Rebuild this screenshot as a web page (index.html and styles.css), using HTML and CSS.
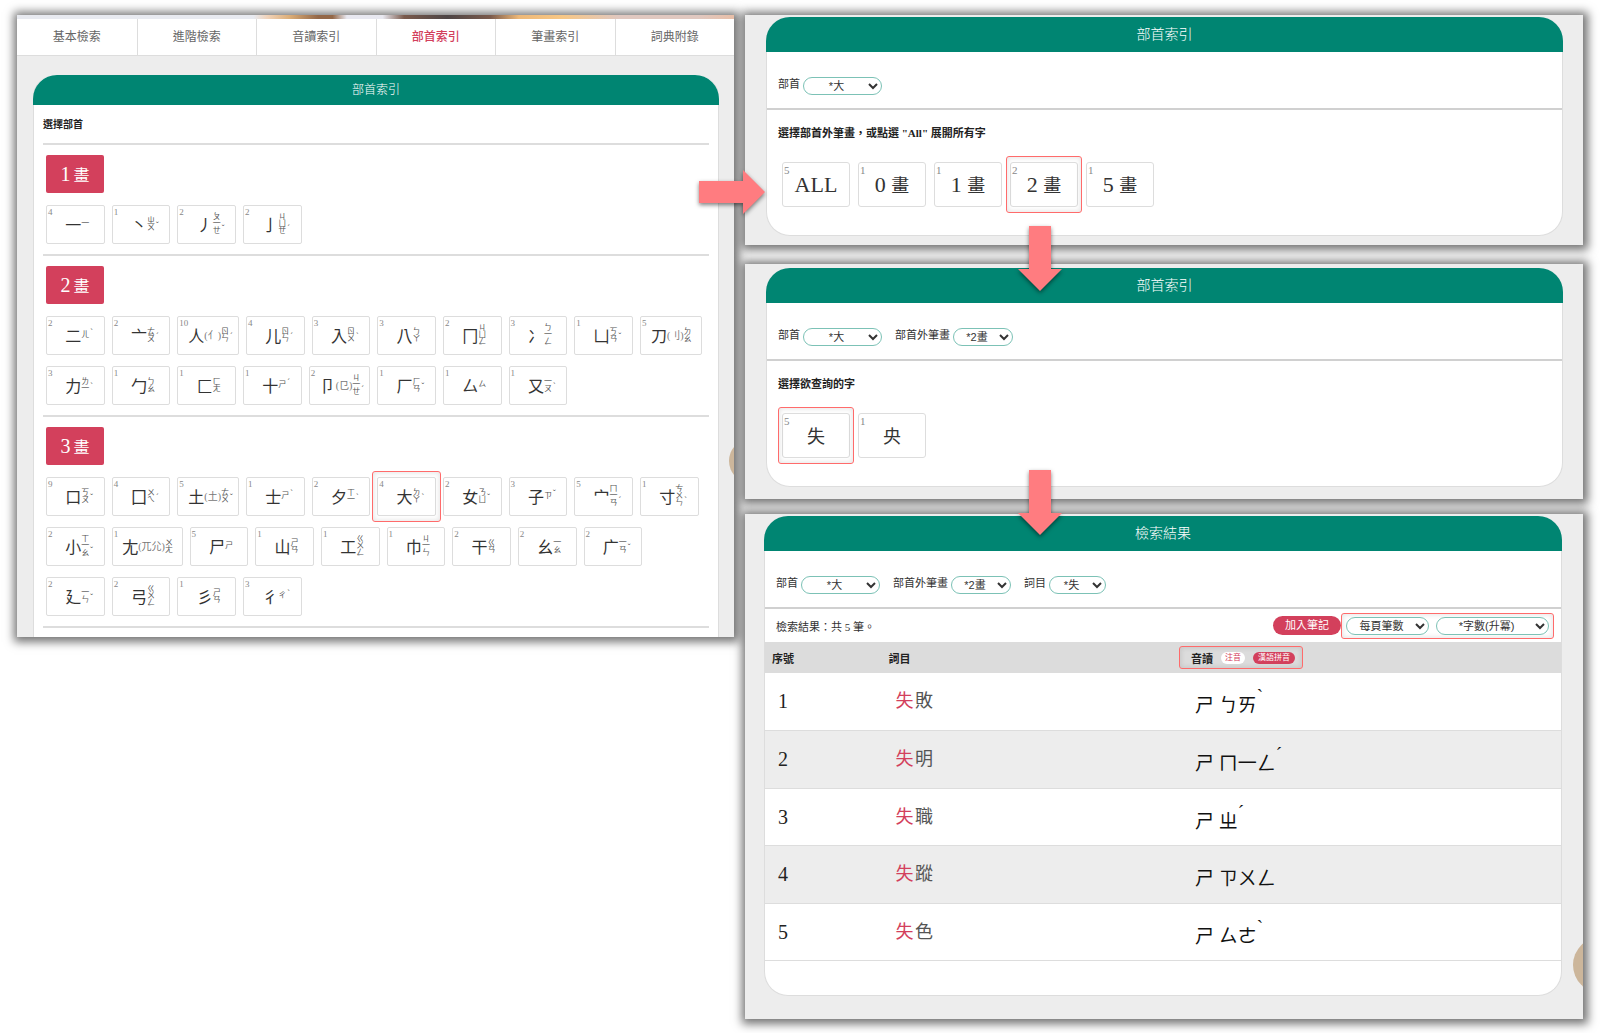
FILE: index.html
```html
<!DOCTYPE html>
<html lang="zh-Hant">
<head>
<meta charset="utf-8">
<title>部首索引</title>
<link rel="stylesheet" href="styles.css">
</head>
<body>
<main class="board">
  <section class="panel panel-index">
    <div class="clip">
      <div class="banner"></div>
      <nav class="tabs">
        <a href="#">基本檢索</a><a href="#">進階檢索</a><a href="#">音讀索引</a><a href="#" class="active">部首索引</a><a href="#">筆畫索引</a><a href="#">詞典附錄</a>
      </nav>
      <div class="card card-index">
        <h1 class="bar bar-small">部首索引</h1>
        <div class="index-body">
          <h2 class="lead lead-small">選擇部首</h2>
          <section class="strokes">
            <h3 class="count">1 <span>畫</span></h3>
            <div class="row">
              <a class="tile" href="#"><small>4</small><b>一</b><span class="zy">一</span></a>
              <a class="tile" href="#"><small>1</small><b>丶</b><span class="zy">ㄓㄨ<i>ˇ</i></span></a>
              <a class="tile" href="#"><small>2</small><b>丿</b><span class="zy">ㄆ一ㄝ<i>ˇ</i></span></a>
              <a class="tile" href="#"><small>2</small><b>亅</b><span class="zy">ㄐㄩㄝ<i>ˊ</i></span></a>
            </div>
          </section>
          <section class="strokes">
            <h3 class="count">2 <span>畫</span></h3>
            <div class="row">
              <a class="tile" href="#"><small>2</small><b>二</b><span class="zy">ㄦ<i>ˋ</i></span></a>
              <a class="tile" href="#"><small>2</small><b>亠</b><span class="zy">ㄊㄡ<i>ˊ</i></span></a>
              <a class="tile wide" href="#"><small>10</small><b>人</b><em>(亻)</em><span class="zy">ㄖㄣ<i>ˊ</i></span></a>
              <a class="tile" href="#"><small>4</small><b>儿</b><span class="zy">ㄖㄣ<i>ˊ</i></span></a>
              <a class="tile" href="#"><small>3</small><b>入</b><span class="zy">ㄖㄨ<i>ˋ</i></span></a>
              <a class="tile" href="#"><small>3</small><b>八</b><span class="zy">ㄅㄚ</span></a>
              <a class="tile" href="#"><small>2</small><b>冂</b><span class="zy">ㄐㄩㄥ</span></a>
              <a class="tile" href="#"><small>3</small><b>冫</b><span class="zy">ㄅ一ㄥ</span></a>
              <a class="tile" href="#"><small>1</small><b>凵</b><span class="zy">ㄎㄢ<i>ˇ</i></span></a>
              <a class="tile wide" href="#"><small>5</small><b>刀</b><em>(刂)</em><span class="zy">ㄉㄠ</span></a>
            </div>
            <div class="row">
              <a class="tile" href="#"><small>3</small><b>力</b><span class="zy">ㄌ一<i>ˋ</i></span></a>
              <a class="tile" href="#"><small>1</small><b>勹</b><span class="zy">ㄅㄠ</span></a>
              <a class="tile" href="#"><small>1</small><b>匚</b><span class="zy">ㄈㄤ</span></a>
              <a class="tile" href="#"><small>1</small><b>十</b><span class="zy">ㄕ<i>ˊ</i></span></a>
              <a class="tile wide" href="#"><small>2</small><b>卩</b><em>(㔾)</em><span class="zy">ㄐ一ㄝ<i>ˊ</i></span></a>
              <a class="tile" href="#"><small>1</small><b>厂</b><span class="zy">ㄏㄢ<i>ˇ</i></span></a>
              <a class="tile" href="#"><small>1</small><b>厶</b><span class="zy">ㄙ</span></a>
              <a class="tile" href="#"><small>1</small><b>又</b><span class="zy">一ㄡ<i>ˋ</i></span></a>
            </div>
          </section>
          <section class="strokes">
            <h3 class="count">3 <span>畫</span></h3>
            <div class="row">
              <a class="tile" href="#"><small>9</small><b>口</b><span class="zy">ㄎㄡ<i>ˇ</i></span></a>
              <a class="tile" href="#"><small>4</small><b>囗</b><span class="zy">ㄨㄟ<i>ˊ</i></span></a>
              <a class="tile wide" href="#"><small>5</small><b>土</b><em>(土)</em><span class="zy">ㄊㄨ<i>ˇ</i></span></a>
              <a class="tile" href="#"><small>1</small><b>士</b><span class="zy">ㄕ<i>ˋ</i></span></a>
              <a class="tile" href="#"><small>2</small><b>夕</b><span class="zy">ㄒ一<i>ˋ</i></span></a>
              <a class="tile picked" href="#"><small>4</small><b>大</b><span class="zy">ㄉㄚ<i>ˋ</i></span></a>
              <a class="tile" href="#"><small>2</small><b>女</b><span class="zy">ㄋㄩ<i>ˇ</i></span></a>
              <a class="tile" href="#"><small>3</small><b>子</b><span class="zy">ㄗ<i>ˇ</i></span></a>
              <a class="tile" href="#"><small>5</small><b>宀</b><span class="zy">ㄇ一ㄢ<i>ˊ</i></span></a>
              <a class="tile" href="#"><small>1</small><b>寸</b><span class="zy">ㄘㄨㄣ<i>ˋ</i></span></a>
            </div>
            <div class="row">
              <a class="tile" href="#"><small>2</small><b>小</b><span class="zy">ㄒ一ㄠ<i>ˇ</i></span></a>
              <a class="tile widest" href="#"><small>1</small><b>尢</b><em>(兀尣)</em><span class="zy">ㄨㄤ</span></a>
              <a class="tile" href="#"><small>5</small><b>尸</b><span class="zy">ㄕ</span></a>
              <a class="tile" href="#"><small>1</small><b>山</b><span class="zy">ㄕㄢ</span></a>
              <a class="tile" href="#"><small>1</small><b>工</b><span class="zy">ㄍㄨㄥ</span></a>
              <a class="tile" href="#"><small>1</small><b>巾</b><span class="zy">ㄐ一ㄣ</span></a>
              <a class="tile" href="#"><small>2</small><b>干</b><span class="zy">ㄍㄢ</span></a>
              <a class="tile" href="#"><small>2</small><b>幺</b><span class="zy">一ㄠ</span></a>
              <a class="tile" href="#"><small>2</small><b>广</b><span class="zy">一ㄢ<i>ˇ</i></span></a>
            </div>
            <div class="row">
              <a class="tile" href="#"><small>2</small><b>廴</b><span class="zy">一ㄣ<i>ˇ</i></span></a>
              <a class="tile" href="#"><small>2</small><b>弓</b><span class="zy">ㄍㄨㄥ</span></a>
              <a class="tile" href="#"><small>1</small><b>彡</b><span class="zy">ㄕㄢ</span></a>
              <a class="tile" href="#"><small>3</small><b>彳</b><span class="zy">ㄔ<i>ˋ</i></span></a>
            </div>
          </section>
          <div class="strokes strokes-end"></div>
        </div>
      </div>
      <span class="dot dot-small"></span>
    </div>
    <svg class="arrow arrow-right" viewBox="0 0 66 44" width="66" height="44"><path d="M0 11H44V0L66 22L44 44V33H0Z"/></svg>
  </section>

  <div class="column">
    <section class="panel panel-strokes">
      <div class="card">
        <h1 class="bar">部首索引</h1>
        <form class="filters">
          <label for="r1">部首</label><select id="r1" class="w-radical"><option>*大</option></select>
        </form>
        <h2 class="lead">選擇部首外筆畫，或點選 "All" 展開所有字</h2>
        <div class="choices">
          <a class="choice" href="#"><small>5</small>ALL</a>
          <a class="choice" href="#"><small>1</small>0 <span>畫</span></a>
          <a class="choice" href="#"><small>1</small>1 <span>畫</span></a>
          <a class="choice picked" href="#"><small>2</small>2 <span>畫</span></a>
          <a class="choice" href="#"><small>1</small>5 <span>畫</span></a>
        </div>
      </div>
      <svg class="arrow arrow-down" viewBox="0 0 44 66" width="44" height="66"><path d="M11 0H33V43H44L22 65L0 43H11Z"/></svg>
    </section>

    <section class="panel panel-chars">
      <div class="card">
        <h1 class="bar">部首索引</h1>
        <form class="filters">
          <label for="r2">部首</label><select id="r2" class="w-radical"><option>*大</option></select>
          <label for="s2">部首外筆畫</label><select id="s2" class="w-stroke"><option>*2畫</option></select>
        </form>
        <h2 class="lead">選擇欲查詢的字</h2>
        <div class="choices">
          <a class="choice picked" href="#"><small>5</small><span>失</span></a>
          <a class="choice" href="#"><small>1</small><span>央</span></a>
        </div>
      </div>
      <svg class="arrow arrow-down arrow-second" viewBox="0 0 44 66" width="44" height="66"><path d="M11 0H33V43H44L22 65L0 43H11Z"/></svg>
    </section>

    <section class="panel panel-results">
      <div class="clip">
        <div class="card card-results">
          <h1 class="bar">檢索結果</h1>
          <form class="filters">
            <label for="r3">部首</label><select id="r3" class="w-radical"><option>*大</option></select>
            <label for="s3">部首外筆畫</label><select id="s3" class="w-stroke"><option>*2畫</option></select>
            <label for="c3">詞目</label><select id="c3" class="w-char"><option>*失</option></select>
          </form>
          <div class="toolbar">
            <p>檢索結果：共 5 筆。</p>
            <button type="button" class="note">加入筆記</button>
            <div class="ring">
              <select class="w-page" aria-label="每頁筆數"><option>每頁筆數</option></select>
              <select class="w-sort" aria-label="排序"><option>*字數(升冪)</option></select>
            </div>
          </div>
          <table>
            <thead>
              <tr><th class="c-no">序號</th><th class="c-word">詞目</th><th class="c-sound"><span class="ring ring-th">音讀<button type="button" class="pill">注音</button><button type="button" class="pill pill-on">漢語拼音</button></span></th></tr>
            </thead>
            <tbody>
              <tr><td>1</td><td class="word"><a href="#"><mark>失</mark> 敗</a></td><td class="sound">ㄕ ㄅㄞ<i>ˋ</i></td></tr>
              <tr><td>2</td><td class="word"><a href="#"><mark>失</mark> 明</a></td><td class="sound">ㄕ ㄇ一ㄥ<i>ˊ</i></td></tr>
              <tr><td>3</td><td class="word"><a href="#"><mark>失</mark> 職</a></td><td class="sound">ㄕ ㄓ<i>ˊ</i></td></tr>
              <tr><td>4</td><td class="word"><a href="#"><mark>失</mark> 蹤</a></td><td class="sound">ㄕ ㄗㄨㄥ</td></tr>
              <tr><td>5</td><td class="word"><a href="#"><mark>失</mark> 色</a></td><td class="sound">ㄕ ㄙㄜ<i>ˋ</i></td></tr>
            </tbody>
          </table>
        </div>
        <span class="dot"></span>
      </div>
    </section>
  </div>
</main>
</body>
</html>
```
FILE: styles.css
```css
* { box-sizing: border-box; }

body {
  margin: 0;
  background: #fff;
  color: #333;
  font-family: "Liberation Serif", "Noto Sans CJK TC", serif;
  font-size: 11px;
}

h1, h2, h3, p { margin: 0; }
a { color: inherit; text-decoration: none; }
i, em { font-style: normal; }

.board {
  display: grid;
  grid-template-columns: 717fr 838fr;
  gap: 11px;
  align-items: start;
  padding: 15px 17px;
  position: relative;
  z-index: 0;
}

.column {
  display: flex;
  flex-direction: column;
}

.panel {
  position: relative;
  background: #ededed;
}

/* shadows sit below every panel */
.panel::before {
  content: "";
  position: absolute;
  inset: 0;
  z-index: -1;
  box-shadow: 1px 1px 9px 4px rgba(0, 0, 0, .55);
}

.panel-strokes { padding: 2px 20px 9px 21px; margin-bottom: 19px; }
.panel-chars { padding: 4px 20px 12px 21px; margin-bottom: 15px; }

.clip {
  position: relative;
  overflow: hidden;
  background: #ededed;
}

.panel-results .clip { padding: 2px 21px 23px 19px; }

/* index panel */
.banner {
  height: 4px;
  background: linear-gradient(90deg, #e8eaf0 0 33%, #f0d2b8 35%, #dcae78 38%, #946848 42% 44%, #e8e8f0 46% 51%, #7a5a4c 54%, #4d4545 60%, #7a5a4c 66%, #edb878 70%, #f7c785 76%, #e0c8c0 84% 95%, #e8bfa8);
}

.tabs {
  display: grid;
  grid-template-columns: repeat(6, 1fr);
  background: #fff;
  border-bottom: 1px solid #ddd;
}

.tabs a {
  color: #666;
  font-size: 12px;
  line-height: 36px;
  text-align: center;
}

.tabs a + a { border-left: 1px solid #ddd; }
.tabs .active { color: #d3405c; font-weight: 500; }

.card {
  background: #fff;
  border: 1px solid #ddd;
  border-top: 0;
  border-radius: 24px;
  padding-bottom: 28px;
}

.card-index {
  margin: 19px 15px 0 16px;
  border-radius: 22px 22px 0 0;
  border-bottom: 0;
  padding: 0;
}

.bar {
  margin: 0 -1px;
  border-radius: 24px 24px 0 0;
  background: #008572;
  color: #fff;
  font-size: 14px;
  font-weight: 300;
  line-height: 35px;
  text-align: center;
}

.bar-small {
  font-size: 12px;
  line-height: 30px;
}

.index-body { padding: 0 9px; }

.lead {
  color: #222;
  font-size: 11px;
  line-height: 16px;
  font-weight: 700;
  padding: 15px 11px 0;
}

.lead-small {
  font-size: 10px;
  padding: 12px 0 10px;
}

.strokes {
  border-top: 2px solid #ddd;
  padding: 10px 0 10px 3px;
}

.strokes-end { padding: 9px 0 0; }

.count {
  width: 58px;
  margin-bottom: 12px;
  border-radius: 2px;
  background: #d3405c;
  color: #fff;
  font-size: 20px;
  font-weight: 400;
  line-height: 38px;
  height: 38px;
  text-align: center;
  white-space: nowrap;
}

.count span { font-size: 16px; line-height: 1; margin-left: -2px; }

.row {
  display: flex;
  gap: 7px;
}

.row + .row { margin-top: 11px; }

.tile {
  position: relative;
  flex: none;
  width: calc(9% - 1px);
  height: 39px;
  padding: 0 0 2px 5px;
  display: flex;
  align-items: center;
  justify-content: center;
  border: 1px solid #ddd;
  border-radius: 2px;
  background: #fff;
}

.wide { width: calc(9% + 2px); }
.widest { width: calc(11% - 2px); }
.wide, .widest { padding-left: 2px; }

.tile b {
  font-size: 16px;
  font-weight: 400;
}

.tile em {
  color: #777;
  font-size: 10px;
}

.tile small, .choice small {
  position: absolute;
  top: 1px;
  left: 1px;
  color: #888;
  font-size: 9px;
  line-height: 10px;
}

.choice small { font-size: 11px; line-height: 12px; }

.zy {
  position: relative;
  width: 9px;
  color: #555;
  font-size: 8px;
  line-height: 7px;
  word-break: break-all;
}

.zy i {
  position: absolute;
  left: 9px;
  bottom: 2px;
}

.picked::after {
  content: "";
  position: absolute;
  inset: -7px -6px;
  z-index: 1;
  border: 1px solid #ff6b6b;
  border-radius: 3px;
  box-shadow: inset 0 0 5px 1px rgba(0, 0, 0, .1);
}

.dot {
  position: absolute;
  right: -46px;
  bottom: 26px;
  width: 56px;
  height: 56px;
  border-radius: 50%;
  background: #ccb69b;
}

.dot-small {
  right: -39px;
  bottom: 154px;
  width: 44px;
  height: 44px;
}

.arrow {
  position: absolute;
  z-index: 3;
  fill: #ff7c80;
  overflow: visible;
  filter: drop-shadow(0 2px 2px rgba(0, 0, 0, .5));
}

.arrow-right { right: -31px; top: 155px; }
.arrow-down { left: 33%; bottom: -47px; margin-left: -4px; }
.arrow-second { bottom: -37px; }

/* right-hand cards */
.filters {
  display: flex;
  align-items: center;
  gap: 3px;
  padding: 25px 11px 13px;
  border-bottom: 2px solid #d0d0d0;
}

.filters label { line-height: 18px; padding-bottom: 4px; margin-bottom: -4px; margin-top: -4px; }
.filters select + label { margin-left: 10px; }

select {
  height: 18px;
  padding: 0 2px;
  border: 1px solid #7cc2b6;
  border-radius: 9px;
  background: #fff;
  color: #333;
  font-family: "Liberation Sans", "Noto Sans CJK TC", sans-serif;
  font-size: 11px;
  text-align: center;
  text-align-last: center;
}

.w-radical { width: 79px; }
.w-stroke { width: 60px; }
.w-char { width: 57px; }
.w-page { width: 83px; }
.w-sort { width: 113px; }

.choices {
  display: flex;
  gap: 8px;
  padding: 21px 15px 0;
}

.choice {
  position: relative;
  width: 68px;
  border: 1px solid #ddd;
  border-radius: 3px;
  font-size: 22px;
  line-height: 43px;
  height: 45px;
  text-align: center;
  white-space: nowrap;
}

.choice span { font-size: 18px; line-height: 1; margin-left: -3px; }
.choice small + span { margin-left: 0; }
.choice.picked::after { inset: -7px -5px; }

.card-results { padding-bottom: 34px; }

.toolbar {
  display: flex;
  align-items: center;
  height: 33px;
  padding: 0 7px 0 11px;
}

.toolbar p { margin-right: auto; }

.note {
  width: 68px;
  height: 19px;
  padding: 0;
  border: 0;
  border-radius: 10px;
  background: #d3405c;
  color: #fff;
  font-family: inherit;
  font-size: 11px;
  line-height: 19px;
}

.ring {
  display: flex;
  gap: 7px;
  padding: 3px 4px;
  border: 1px solid #ff6b6b;
  border-radius: 3px;
  box-shadow: inset 0 0 5px 1px rgba(0, 0, 0, .1);
}

.ring-th {
  display: inline-flex;
  align-items: center;
  gap: 8px;
  padding: 0 7px 0 11px;
  height: 23px;
}

table {
  width: 100%;
  table-layout: fixed;
  border-collapse: collapse;
}

th {
  height: 31px;
  padding: 0 7px;
  background: #dcdcdc;
  color: #222;
  font-size: 11px;
  text-align: left;
}

th.c-no { width: 15%; }
th.c-word { width: 37%; padding-left: 4px; }
th.c-sound { padding: 0; }

.pill {
  height: 12px;
  padding: 0 4px;
  border: 0;
  border-radius: 6px;
  background: #fff;
  color: #d3405c;
  font-family: inherit;
  font-size: 8px;
  line-height: 12px;
}

.pill-on { background: #d3405c; color: #fff; padding: 0 5px; }

td {
  height: 57px;
  padding: 0 13px;
  border-bottom: 1px solid #ddd;
  color: #222;
  font-size: 20px;
  line-height: 28px;
}

tbody tr:nth-child(even) td { height: 58px; }

td.word { font-size: 18px; padding-left: 11px; color: #555; }
td.word mark { background: none; color: #d3405c; margin-right: -3px; }
td.sound { font-size: 19px; padding: 10px 0 0 16px; color: #111; }
td.sound i { position: relative; top: -10px; }
tbody tr:nth-child(even) { background: #ededed; }
```
